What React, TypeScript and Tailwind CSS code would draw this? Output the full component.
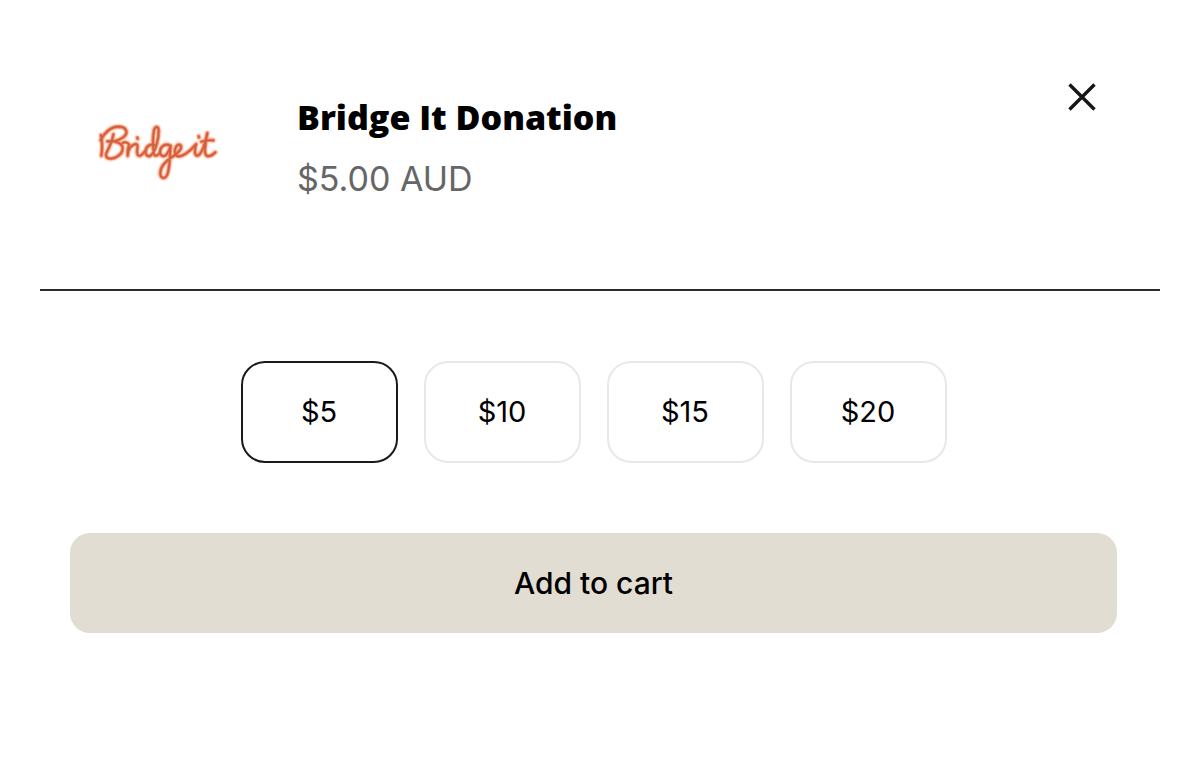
import { useState } from "react";

const amounts = [5, 10, 15, 20];

function BridgeItLogo() {
  const strokes = (
    <>
      <path d="M33 60 C37 82 37 104 34 122" />
      <path d="M32 76 C42 54 62 35 86 35 C112 36 116 56 98 68 C82 79 62 82 52 79 C76 76 98 84 98 100 C98 120 72 134 56 130 C46 127 46 118 52 108 C60 92 68 76 70 58" />
      <path d="M98 84 C104 80 112 82 117 88 C114 100 112 112 113 122 C114 106 122 92 134 88 C142 86 144 92 142 102 C140 114 142 124 150 122 C157 120 162 112 167 106" />
      <path d="M196 92 C184 84 170 92 167 106 C165 120 174 128 184 120 C196 108 207 70 206 46 C205 34 196 32 192 46 C188 66 188 100 192 116 C195 126 204 122 210 112" />
      <path d="M240 92 C228 84 213 92 210 108 C209 122 220 128 230 118 C236 110 240 100 242 92 C240 116 240 146 234 172 C229 192 214 194 211 178 C209 158 226 138 246 126 C256 120 266 112 272 102 C276 90 266 84 259 94 C250 108 254 124 266 124 C284 124 302 106 318 88" />
      <path d="M318 88 C314 104 312 122 322 122 C332 120 342 100 352 54 C348 78 342 104 346 116 C350 128 364 124 376 112" />
      <path d="M334 80 C346 76 358 75 370 76" />
      <path d="M142 68 L143 71 M326 64 L327 67" />
    </>
  );
  return (
    <svg
      viewBox="0 0 405 225"
      className="h-[75px] w-[135px] shrink-0"
      fill="none"
      strokeLinecap="round"
      strokeLinejoin="round"
      role="img"
      aria-label="Bridge it"
    >
      <g stroke="#fde0d6" strokeWidth="19">{strokes}</g>
      <g stroke="#f58b66" strokeWidth="11">{strokes}</g>
      <g stroke="#cc5f40" strokeWidth="5">{strokes}</g>
    </svg>
  );
}

export default function App() {
  const [selected, setSelected] = useState(5);

  return (
    <main className="min-h-screen bg-white px-10 pt-[75px] pb-32 font-['Inter','Work_Sans',sans-serif] text-black">
      <header className="flex items-start border-b-2 border-[#2d2b2d] pr-14 pb-[90px] pl-[50px]">
        <div className="pt-10">
          <BridgeItLogo />
        </div>
        <div className="ml-[72px] grow pt-5">
          <h1 className="font-['Open_Sans',sans-serif] text-[34px] leading-[44px] font-extrabold">
            Bridge It Donation
          </h1>
          <p className="mt-5 text-[34px] leading-10 text-[#666666]">$5.00 AUD</p>
        </div>
        <button type="button" aria-label="Close" className="flex size-11 items-center justify-center">
          <svg viewBox="0 0 28 28" className="size-7" fill="none" stroke="#161616" strokeWidth="3.4">
            <path d="M1.5 1.5 L26.5 26.5 M26.5 1.5 L1.5 26.5" />
          </svg>
        </button>
      </header>

      <form className="pr-[43px] pl-[30px]" onSubmit={(event) => event.preventDefault()}>
        <fieldset aria-label="Amount" className="flex justify-center gap-[26px] pt-[70px]">
          {amounts.map((amount) => (
            <label
              key={amount}
              className="relative flex h-[102px] w-[157px] cursor-pointer items-center justify-center rounded-3xl border-2 border-[#e8e8e8] text-[29px] leading-8 has-checked:border-[#1a1a1a]"
            >
              <input
                type="radio"
                name="amount"
                value={amount}
                checked={selected === amount}
                onChange={() => setSelected(amount)}
                className="sr-only"
              />
              <span>${amount}</span>
            </label>
          ))}
        </fieldset>
        <button
          type="submit"
          className="mt-[70px] h-[100px] w-full cursor-pointer rounded-[20px] bg-[#e1ddd2] text-[30px] leading-8 font-medium"
        >
          Add to cart
        </button>
      </form>
    </main>
  );
}
